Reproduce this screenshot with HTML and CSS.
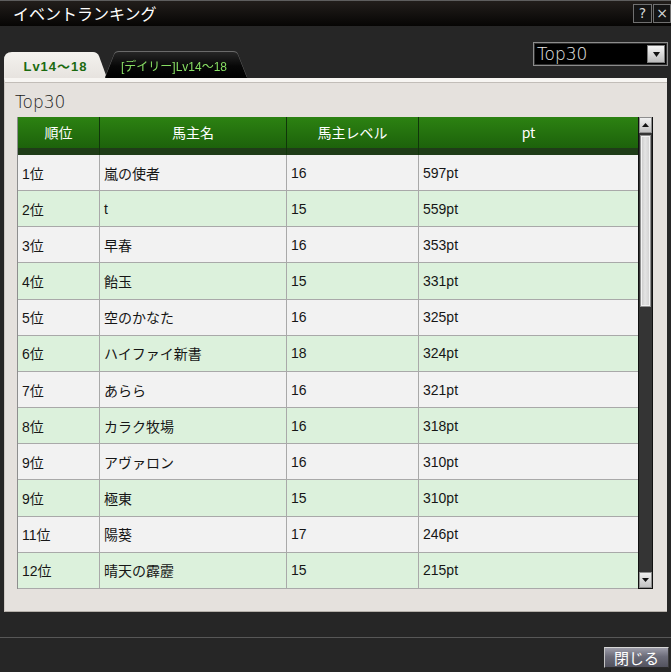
FILE: index.html
```html
<!DOCTYPE html>
<html lang="ja">
<head>
<meta charset="utf-8">
<title>イベントランキング</title>
<link rel="stylesheet" href="styles.css">
</head>
<body>
<div class="window">
  <header class="titlebar">
    <h1 class="title">イベントランキング</h1>
    <div class="title-buttons">
      <button class="tbtn">?</button>
      <button class="tbtn tbtn-close">×</button>
    </div>
  </header>

  <div class="toolbar">
    <nav class="tabs">
      <div class="tab tab-active">Lv14〜18</div>
      <div class="tab-wrap"><div class="tab tab-inactive">[デイリー]Lv14〜18</div></div>
    </nav>
    <div class="select">
      <span class="select-text">Top30</span>
      <span class="select-arrow"><svg width="7" height="5" viewBox="0 0 7 5"><path d="M0 0H7L3.5 5Z" fill="#111"/></svg></span>
    </div>
  </div>

  <section class="panel">
    <div class="panel-label">Top30</div>
    <div class="table-wrap">
      <div class="grid">
        <div class="row head">
          <div class="cell">順位</div><div class="cell">馬主名</div><div class="cell">馬主レベル</div><div class="cell">pt</div>
        </div>
        <div class="row odd"><div class="cell">1位</div><div class="cell">嵐の使者</div><div class="cell">16</div><div class="cell">597pt</div></div>
        <div class="row even"><div class="cell">2位</div><div class="cell">t</div><div class="cell">15</div><div class="cell">559pt</div></div>
        <div class="row odd"><div class="cell">3位</div><div class="cell">早春</div><div class="cell">16</div><div class="cell">353pt</div></div>
        <div class="row even"><div class="cell">4位</div><div class="cell">飴玉</div><div class="cell">15</div><div class="cell">331pt</div></div>
        <div class="row odd"><div class="cell">5位</div><div class="cell">空のかなた</div><div class="cell">16</div><div class="cell">325pt</div></div>
        <div class="row even"><div class="cell">6位</div><div class="cell">ハイファイ新書</div><div class="cell">18</div><div class="cell">324pt</div></div>
        <div class="row odd"><div class="cell">7位</div><div class="cell">あらら</div><div class="cell">16</div><div class="cell">321pt</div></div>
        <div class="row even"><div class="cell">8位</div><div class="cell">カラク牧場</div><div class="cell">16</div><div class="cell">318pt</div></div>
        <div class="row odd"><div class="cell">9位</div><div class="cell">アヴァロン</div><div class="cell">16</div><div class="cell">310pt</div></div>
        <div class="row even"><div class="cell">9位</div><div class="cell">極東</div><div class="cell">15</div><div class="cell">310pt</div></div>
        <div class="row odd"><div class="cell">11位</div><div class="cell">陽葵</div><div class="cell">17</div><div class="cell">246pt</div></div>
        <div class="row even"><div class="cell">12位</div><div class="cell">晴天の霹靂</div><div class="cell">15</div><div class="cell">215pt</div></div>
      </div>
      <div class="scrollbar">
        <div class="sbtn"><svg width="7" height="4" viewBox="0 0 7 4"><path d="M3.5 0L7 4H0Z" fill="#111"/></svg></div>
        <div class="thumb"></div>
        <div class="track"></div>
        <div class="sbtn"><svg width="7" height="4" viewBox="0 0 7 4"><path d="M0 0H7L3.5 4Z" fill="#111"/></svg></div>
      </div>
    </div>
  </section>

  <footer class="footer">
    <button class="close">閉じる</button>
  </footer>
</div>
</body>
</html>
```

FILE: styles.css
```css
* { box-sizing: border-box; margin: 0; padding: 0; }
html, body { width: 671px; height: 672px; overflow: hidden; }
body { background: #262626; font-family: "Noto Sans CJK JP", sans-serif; }

.window { display: flex; flex-direction: column; height: 672px; }

/* title bar */
.titlebar {
  height: 26px; flex: none;
  display: flex; justify-content: space-between; align-items: flex-start;
  background: linear-gradient(#221e1b, #060504);
  border-top: 1px solid #5e5e5e;
}
.title { font-size: 16px; font-weight: normal; color: #fff; line-height: 24px; padding-left: 13px; }
.title-buttons { display: flex; gap: 1px; margin-top: 3px; }
.tbtn {
  width: 19px; height: 19px;
  border: 1px solid #707070; background: #141414; color: #d6d6d6;
  font: 14px/17px "DejaVu Sans", sans-serif; text-align: center;
}
.tbtn-close { width: 18px; }

/* toolbar */
.toolbar { height: 52px; flex: none; display: flex; justify-content: space-between; }
.tabs { display: flex; align-items: flex-end; padding-left: 4px; }
.tab {
  height: 26px; display: flex; align-items: center; justify-content: center;
}
.tab-active {
  width: 103px;
  clip-path: path('M0 26 L0 8 Q0 0 8 0 L89 0 Q93 0 95 4 L103 26 Z');
  background: linear-gradient(#f4f2ee, #e7e3df);
  color: #1b6a10;
  font: bold 13px "Liberation Sans", "Noto Sans CJK JP", sans-serif;
  letter-spacing: 1px;
}
.tab-wrap { margin-left: -2px; filter: drop-shadow(0 -1px 0 #6a6a6a); }
.tab-inactive {
  width: 142px;
  clip-path: path('M0 26 L9 3 Q10 0 14 0 L128 0 Q132 0 133 3 L142 26 Z');
  background: linear-gradient(#262626, #070707 55%, #000);
  color: #88de64;
  font: 12px "Liberation Sans", "Noto Sans CJK JP", sans-serif;
  padding-right: 4px;
}

.select {
  width: 135px; height: 24px; margin-top: 16px; margin-right: 3px;
  border: 1px solid #8c8c8c; background: #000;
  box-shadow: inset 0 0 0 1px #303030;
  display: flex; align-items: center; justify-content: space-between;
  padding: 0 2px 0 3px;
}
.select-text { font: 200 17px/20px "DejaVu Sans", sans-serif; color: #e6e6e6; }
.select-arrow {
  width: 18px; height: 18px;
  background: linear-gradient(#f6f6f6, #bdbdbd);
  border: 1px solid #7a7a7a;
  display: flex; align-items: center; justify-content: center;
}

/* panel */
.panel {
  height: 534px; flex: none; margin: 0 4px;
  background: #e5e1dd;
  border-top: 4px solid #f7f5f2;
  border-left: 1px solid #cdc8c3;
  border-bottom: 1px solid #b5b0aa;
  box-shadow: inset 0 1px 0 #c2bdb8;
  padding: 10px 14px 0 12px;
  display: flex; flex-direction: column; gap: 5px;
}
.panel-label { font: 200 17px/20px "DejaVu Sans", sans-serif; color: #1c1c1c; margin-left: -2px; height: 20px; }

.table-wrap { display: flex; height: 472px; }
.grid { width: 621px; border-left: 1px solid #8e8e8e; display: flex; flex-direction: column; }
.row {
  display: grid; grid-template-columns: 81px 187px 132px 1fr;
  height: 36.1667px; flex: none;
  border-bottom: 1px solid #a9a9a9;
}
.row .cell + .cell { border-left: 1px solid #a9a9a9; }
.cell {
  display: flex; align-items: center; padding-left: 4px;
  font: 14px "Liberation Sans Narrow", "Liberation Sans", "Noto Sans CJK JP", sans-serif;
  color: #161616;
}
.odd { background: #f2f2f2; }
.even { background: #dcf1dc; }

.head {
  height: 38px; border-bottom: none;
  background: linear-gradient(#2c8212 0, #1d620b 31px, #1f3c18 31px, #1f3c18 100%);
}
.head .cell {
  align-items: flex-start; justify-content: center; padding: 0;
  line-height: 31px; color: #fff;
  font: 14px/31px "Noto Sans CJK JP", sans-serif;
}
.head .cell + .cell { border-left: 1px solid #10360a; }

/* scrollbar */
.scrollbar {
  width: 15px; background: #343434;
  border: 1px solid #111; border-top: none;
  display: flex; flex-direction: column;
}
.sbtn {
  height: 16px; flex: none;
  background: linear-gradient(#f0f0f0, #c2c2c2);
  border: 1px solid #8e8e8e;
  display: flex; align-items: center; justify-content: center;
}
.thumb {
  height: 172px; flex: none; margin: 2px 1px 0;
  background: linear-gradient(to right, #c6c6c6, #e4e4e4 45%, #cfcfcf);
  border: 1px solid #8f8f8f;
  box-shadow: inset 0 0 0 1px #f2f2f2;
}
.track { flex: 1; }

/* footer */
.footer {
  margin-top: 25px;
  border-top: 1px solid #575757;
  padding: 9px 2px 0 0;
  display: flex; justify-content: flex-end;
}
.close {
  width: 65px; height: 21px;
  background: linear-gradient(#9c9ca8, #6c6c79 45%, #52525e);
  border: 1px solid; border-color: #d8d8d8 #3a3a3a #2a2a2a #c4c4c4;
  color: #fff; font: 15px/19px "Noto Sans CJK JP", sans-serif;
}
```
